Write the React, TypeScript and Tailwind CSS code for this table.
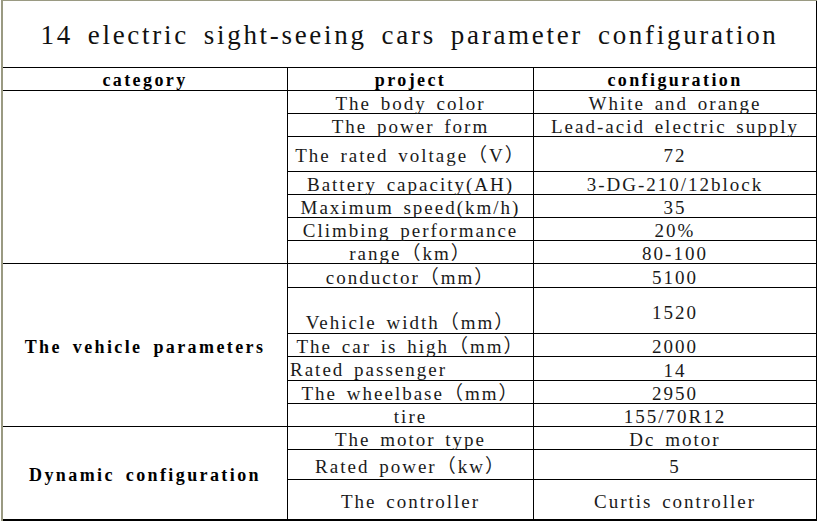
import React from "react";

type Row = { p: string; c: string; pCls?: string };

const rows: Row[] = [
  { p: "The body color", c: "White and orange" },
  { p: "The power form", c: "Lead-acid electric supply" },
  { p: "The rated voltage（V）", c: "72" },
  { p: "Battery capacity(AH)", c: "3-DG-210/12block" },
  { p: "Maximum speed(km/h)", c: "35" },
  { p: "Climbing performance", c: "20%" },
  { p: "range（km）", c: "80-100" },
  { p: "conductor（mm）", c: "5100" },
  { p: "Vehicle width（mm）", c: "1520", pCls: "items-end justify-center pb-[1px]" },
  { p: "The car is high（mm）", c: "2000" },
  { p: "Rated passenger", c: "14", pCls: "items-center justify-start pl-[2px] pt-[2px]" },
  { p: "The wheelbase（mm）", c: "2950" },
  { p: "tire", c: "155/70R12" },
  { p: "The motor type", c: "Dc motor" },
  { p: "Rated power（kw）", c: "5" },
  { p: "The controller", c: "Curtis controller" },
];

const font = "font-['Liberation_Serif','Noto_Sans_CJK_SC',serif]";
const body = "text-[19px] tracking-[2px] [word-spacing:3px] text-[#1a1a1a] leading-none whitespace-nowrap";
const bold = "text-[18px] font-bold tracking-[2.4px] [word-spacing:4px] text-black leading-none whitespace-nowrap";

export default function App() {
  return (
    <div className={`w-[818px] h-[521px] bg-white overflow-hidden ${font}`}>
      <div className="ml-[1px] w-[816px] h-[521px] border-l-2 border-t border-[#9a9a82] bg-black pr-px pb-[2px] grid gap-px grid-cols-[284px_245px_282px] grid-rows-[66px_22px_22px_22px_34px_22px_22px_22px_22px_23px_45px_22px_23px_22px_22px_22px_29px_39px]">
        <div className="col-span-3 bg-white flex items-center justify-center pt-[3px] text-[27px] tracking-[2.7px] [word-spacing:5.5px] text-[#111] leading-none whitespace-nowrap">
          14 electric sight-seeing cars parameter configuration
        </div>
        <div className={`bg-white flex items-center justify-center pt-[2px] ${bold}`}>category</div>
        <div className={`bg-white flex items-center justify-center pt-[2px] ${bold}`}>project</div>
        <div className={`bg-white flex items-center justify-center pt-[2px] ${bold}`}>configuration</div>
        <div className="col-start-1 row-start-3 row-span-7 bg-white"></div>
        <div className={`col-start-1 row-start-10 row-span-6 bg-white flex items-center justify-center pt-[4px] ${bold}`}>
          The vehicle parameters
        </div>
        <div className={`col-start-1 row-start-16 row-span-3 bg-white flex items-center justify-center pt-[4px] ${bold}`}>
          Dynamic configuration
        </div>
        {rows.map((r, i) => (
          <React.Fragment key={i}>
            <div className={`bg-white flex ${body} ${r.pCls ? r.pCls : "items-center justify-center pt-[3px]"}`}>
              {r.p}
            </div>
            <div className={`bg-white flex items-center justify-center pt-[3px] ${body}`}>{r.c}</div>
          </React.Fragment>
        ))}
      </div>
    </div>
  );
}
